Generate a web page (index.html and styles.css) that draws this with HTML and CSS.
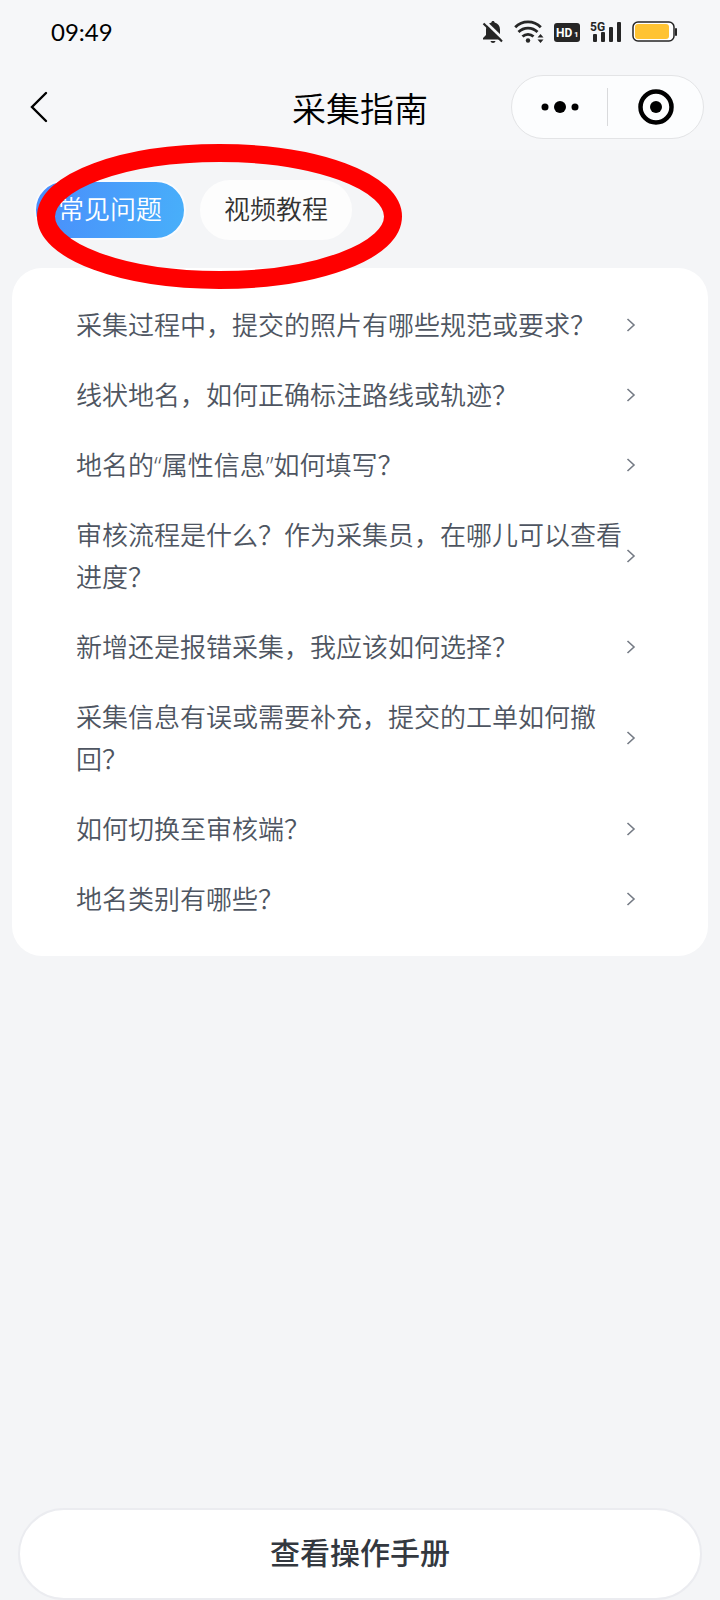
FILE: index.html
```html
<!DOCTYPE html>
<html lang="zh-CN">
<head>
    <meta charset="UTF-8">
    <meta name="viewport" content="width=device-width, initial-scale=1">
    <title>采集指南</title>
    <link rel="stylesheet" href="styles.css">
</head>
<body>
    <header class="header">
        <div class="status-bar">
            <span class="time">09:49</span>
            <div class="status-icons">
                <!-- 静音 -->
                <svg width="22" height="24" viewBox="0 0 22 24">
                    <path d="M11 1c1 0 1.600.7 1.600 1.600C16 3.500 18 6 18 9.500V15l2.500 3v1.500H1V18L4 15V9.500C4 6 6 3.500 9.400 2.600 9.400 1.700 10 1 11 1z" fill="#262626"/>
                    <path d="M8.500 21h5c-.3 1.300-1.200 2-2.500 2s-2.200-.7-2.500-2z" fill="#262626"/>
                    <path d="M3.500 2l18 17.500" stroke="#f6f7f9" stroke-width="3"/>
                    <path d="M1.500 3.500l18.500 18" stroke="#262626" stroke-width="2.200"/>
                </svg>
                <!-- 无线网络 -->
                <svg width="30" height="24" viewBox="0 0 30 24">
                    <g fill="none" stroke="#262626" stroke-width="2.800">
                        <path d="M1.200 7.200a18 18 0 0 1 25.600 0"/>
                        <path d="M4.500 12a13.500 13.500 0 0 1 19 0"/>
                        <path d="M8.500 16.500a8 8 0 0 1 11 0"/>
                    </g>
                    <circle cx="14" cy="20.500" r="2.200" fill="#262626"/>
                    <path d="M26.500 14l3 3.500h-6zM26.500 23l3-3.500h-6z" fill="#262626"/>
                </svg>
                <!-- 高清通话 -->
                <svg width="26" height="24" viewBox="0 0 26 24">
                    <rect x="0" y="3" width="26" height="19" rx="3" fill="#262626"/>
                    <text x="2" y="17" class="hd-text">HD</text>
                    <text x="20" y="17" class="hd-num">1</text>
                </svg>
                <!-- 信号 -->
                <svg width="32" height="24" viewBox="0 0 32 24">
                    <g fill="#262626">
                        <rect x="3" y="14" width="4" height="8" rx="1"/>
                        <rect x="11" y="12" width="4" height="10" rx="1"/>
                        <rect x="19" y="7" width="4" height="15" rx="1"/>
                        <rect x="27" y="2" width="4" height="20" rx="1"/>
                    </g>
                    <text x="0" y="11" class="net-text">5G</text>
                </svg>
                <!-- 电池 -->
                <svg width="46" height="24" viewBox="0 0 46 24">
                    <rect x="1" y="2" width="41" height="19" rx="5" fill="#fff" stroke="#262626" stroke-width="1.500"/>
                    <rect x="3" y="4" width="34" height="15" rx="3" fill="#ffc332"/>
                    <rect x="43" y="8" width="2" height="8" rx="1" fill="#262626"/>
                </svg>
            </div>
        </div>
        <nav class="nav-bar">
            <button type="button" class="back" aria-label="返回">
                <svg width="18" height="32" viewBox="0 0 18 32">
                    <path d="M16 2L2 16l14 14" fill="none" stroke="#000" stroke-width="2.400" stroke-linecap="round"/>
                </svg>
            </button>
            <h1 class="title">采集指南</h1>
            <div class="capsule">
                <button type="button" aria-label="更多">
                    <svg width="38" height="38" viewBox="0 0 38 38">
                        <circle cx="4" cy="19" r="3.500"/>
                        <circle cx="19" cy="19" r="6"/>
                        <circle cx="34" cy="19" r="3.500"/>
                    </svg>
                </button>
                <span class="divider"></span>
                <button type="button" aria-label="关闭">
                    <svg width="38" height="38" viewBox="0 0 38 38">
                        <circle cx="19" cy="19" r="15.500" fill="none" stroke="#000" stroke-width="4.500"/>
                        <circle cx="19" cy="19" r="6"/>
                    </svg>
                </button>
            </div>
        </nav>
    </header>

    <main class="content">
        <div class="tabs">
            <button type="button" class="tab active">常见问题</button>
            <button type="button" class="tab">视频教程</button>
            <svg class="mark" width="366" height="146" viewBox="0 0 366 146">
                <ellipse cx="183.500" cy="72.500" rx="173.500" ry="63.500" fill="none" stroke="#f00" stroke-width="18"/>
            </svg>
        </div>

        <ul class="faq">
            <li><a href="#"><span>采集过程中，提交的照片有哪些规范或要求？</span><svg class="arrow" viewBox="0 0 10 16"><path d="M1.500 2l6.500 6-6.500 6"/></svg></a></li>
            <li><a href="#"><span>线状地名，如何正确标注路线或轨迹？</span><svg class="arrow" viewBox="0 0 10 16"><path d="M1.500 2l6.500 6-6.500 6"/></svg></a></li>
            <li><a href="#"><span>地名的“属性信息”如何填写？</span><svg class="arrow" viewBox="0 0 10 16"><path d="M1.500 2l6.500 6-6.500 6"/></svg></a></li>
            <li><a href="#"><span>审核流程是什么？作为采集员，在哪儿可以查看进度？</span><svg class="arrow" viewBox="0 0 10 16"><path d="M1.500 2l6.500 6-6.500 6"/></svg></a></li>
            <li><a href="#"><span>新增还是报错采集，我应该如何选择？</span><svg class="arrow" viewBox="0 0 10 16"><path d="M1.500 2l6.500 6-6.500 6"/></svg></a></li>
            <li><a href="#"><span>采集信息有误或需要补充，提交的工单如何撤回？</span><svg class="arrow" viewBox="0 0 10 16"><path d="M1.500 2l6.500 6-6.500 6"/></svg></a></li>
            <li><a href="#"><span>如何切换至审核端？</span><svg class="arrow" viewBox="0 0 10 16"><path d="M1.500 2l6.500 6-6.500 6"/></svg></a></li>
            <li><a href="#"><span>地名类别有哪些？</span><svg class="arrow" viewBox="0 0 10 16"><path d="M1.500 2l6.500 6-6.500 6"/></svg></a></li>
        </ul>
    </main>

    <footer class="footer">
        <button type="button" class="manual">查看操作手册</button>
    </footer>
</body>
</html>
```
FILE: styles.css
```css
* { box-sizing: border-box; }
body { margin: 0; min-height: 100vh; display: flex; flex-direction: column; background-color: #f4f5f7; font-family: "Open Sans", "Noto Sans CJK SC", sans-serif; font-size: 26px; font-weight: 350; color: #4e5561; }
button { margin: 0; padding: 0; border: none; background: none; font: inherit; color: inherit; cursor: pointer; }
svg { display: block; flex-shrink: 0; }

/* 顶部 */
.header { background-color: #f6f7f9; padding-bottom: 11px; }
.status-bar { height: 64px; padding: 0 42px 0 51px; display: flex; justify-content: space-between; align-items: center; }
.time { font-family: Lato, sans-serif; font-size: 24px; line-height: 24px; font-weight: 400; color: #000; }
.status-icons { display: flex; align-items: center; gap: 10px; }
.hd-text { font: bold 12px Roboto, sans-serif; fill: #fff; }
.hd-num { font: bold 8px Roboto, sans-serif; fill: #fff; }
.net-text { font: bold 12px Roboto, sans-serif; fill: #262626; stroke: #f6f7f9; stroke-width: 2px; paint-order: stroke; }

.nav-bar { display: grid; grid-template-columns: 1fr auto 1fr; align-items: center; padding: 11px 16px 0; }
.back { justify-self: start; padding-left: 14px; }
.title { margin: 0; padding-top: 4px; font-size: 34px; line-height: 48px; font-weight: 350; color: #000; }
.capsule { justify-self: end; display: flex; align-items: center; width: 193px; height: 64px; border: 1px solid #e3e4e6; border-radius: 32px; background-color: #fcfdfe; }
.capsule button { flex: 1; display: flex; justify-content: center; }
.divider { width: 1px; height: 38px; background-color: #d9dadc; }

/* 标签 */
.content { flex: 1; }
.tabs { position: relative; display: flex; gap: 14px; padding: 30px 34px 28px; }
.tab { height: 60px; padding: 0 22px 4px; border: 2px solid #fdfdfd; border-radius: 30px; background-color: #fdfdfd; color: #333; }
.tab.active { background: linear-gradient(100deg, #4a8cfb, #48b0fa) border-box; border-color: #f9fbfe; color: #fff; }
.mark { position: absolute; left: 36px; top: -6px; pointer-events: none; }

/* 问题列表 */
.faq { list-style: none; margin: 0 12px; padding: 22px 0; background-color: #fff; border-radius: 30px; }
.faq a { display: flex; align-items: center; padding: 14px 72px 14px 64px; line-height: 42px; color: inherit; text-decoration: none; }
.faq span { flex: 1; }
.arrow { width: 10px; height: 16px; fill: none; stroke: #757b85; stroke-width: 1.6; }

.footer { padding: 0 18px; }
.manual { display: block; width: 100%; height: 92px; padding-bottom: 6px; border: 2px solid #ebecf0; border-radius: 46px; background-color: #fff; font-size: 30px; font-weight: 500; color: #33383f; }
```
